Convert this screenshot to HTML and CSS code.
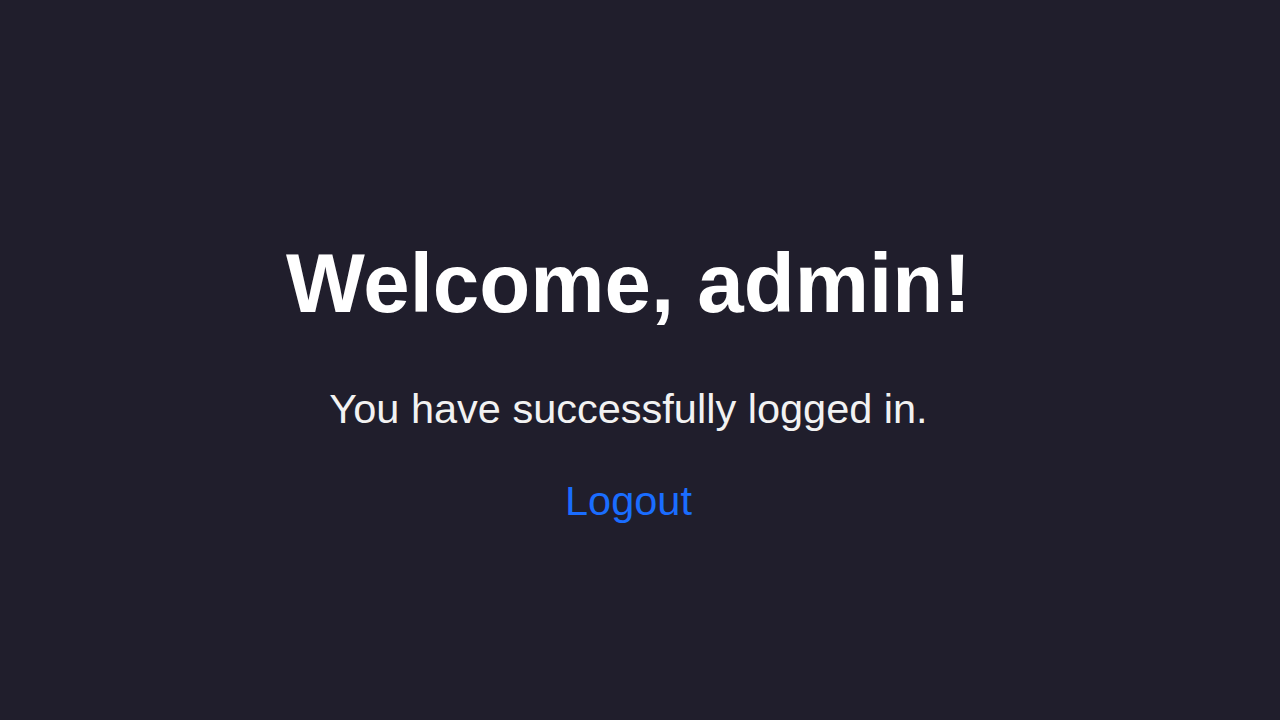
FILE: index.html
```html
<!DOCTYPE html>
<html lang="en">
<head>
    <meta charset="UTF-8">
    <meta name="viewport" content="width=device-width, initial-scale=1.0">
    <title>Welcome</title>
    <link rel="stylesheet" href="styles.css">
</head>
<body>
    <div class="welcome">
        <h1 class="welcome-title">Welcome, admin!</h1>
        <p class="welcome-text">You have successfully logged in.</p>
        <a class="logout" href="#">Logout</a>
    </div>
</body>
</html>
```

FILE: styles.css
```css
* {
    box-sizing: border-box;
}
body {
    margin: 0;
    font-family: "Liberation Sans", Arial, sans-serif;
    background: #201e2c;
    color: #fff;
}
.welcome {
    height: 100vh;
    padding: 40px 23px 0 0;
    display: flex;
    flex-direction: column;
    justify-content: center;
    align-items: center;
    text-align: center;
}
.welcome-title {
    margin: 0 0 53px;
    font-size: 83.5px;
    font-weight: bold;
    line-height: normal;
}
.welcome-text {
    margin: 0 0 44px;
    font-size: 41.5px;
    color: #f2f2f2;
}
.logout {
    font-size: 41.5px;
    color: #1a6dff;
    text-decoration: none;
}
```
